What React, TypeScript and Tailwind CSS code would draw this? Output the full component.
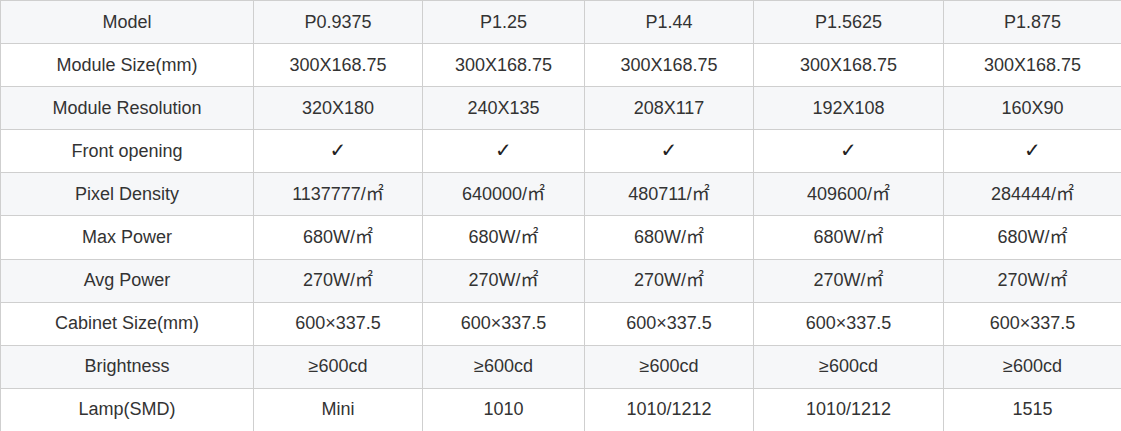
import React from "react";

const headers = ["Model", "P0.9375", "P1.25", "P1.44", "P1.5625", "P1.875"];

const rows: string[][] = [
  ["Module Size(mm)", "300X168.75", "300X168.75", "300X168.75", "300X168.75", "300X168.75"],
  ["Module Resolution", "320X180", "240X135", "208X117", "192X108", "160X90"],
  ["Front opening", "✓", "✓", "✓", "✓", "✓"],
  ["Pixel Density", "1137777/㎡", "640000/㎡", "480711/㎡", "409600/㎡", "284444/㎡"],
  ["Max Power", "680W/㎡", "680W/㎡", "680W/㎡", "680W/㎡", "680W/㎡"],
  ["Avg Power", "270W/㎡", "270W/㎡", "270W/㎡", "270W/㎡", "270W/㎡"],
  ["Cabinet Size(mm)", "600×337.5", "600×337.5", "600×337.5", "600×337.5", "600×337.5"],
  ["Brightness", "≥600cd", "≥600cd", "≥600cd", "≥600cd", "≥600cd"],
  ["Lamp(SMD)", "Mini", "1010", "1010/1212", "1010/1212", "1515"],
];

const widths = ["w-[253px]", "w-[169px]", "w-[162px]", "w-[169px]", "w-[190px]", "w-[178px]"];

const App: React.FC = () => {
  return (
    <div className="w-[1121px] h-[431px] overflow-hidden bg-white font-['Liberation_Sans','DejaVu_Sans','Noto_Sans_CJK_SC',sans-serif] text-[18px] text-[#333]">
      <table className="w-[1122px] table-fixed border-collapse">
        <colgroup>
          {widths.map((w, i) => (
            <col key={i} className={w} />
          ))}
        </colgroup>
        <tbody>
          <tr className="bg-[#f6f7f9]">
            {headers.map((h, i) => (
              <td key={i} className="h-[43.1px] border border-[#cfcfcf] text-center align-middle p-0">
                {h}
              </td>
            ))}
          </tr>
          {rows.map((row, r) => (
            <tr key={r} className={r % 2 === 1 ? "bg-[#f6f7f9]" : "bg-white"}>
              {row.map((cell, c) => (
                <td key={c} className="h-[43.1px] border border-[#cfcfcf] text-center align-middle p-0">
                  {cell === "✓" ? <span className="font-bold text-[20px] leading-none text-[#222]">{cell}</span> : cell}
                </td>
              ))}
            </tr>
          ))}
        </tbody>
      </table>
    </div>
  );
};

export default App;
